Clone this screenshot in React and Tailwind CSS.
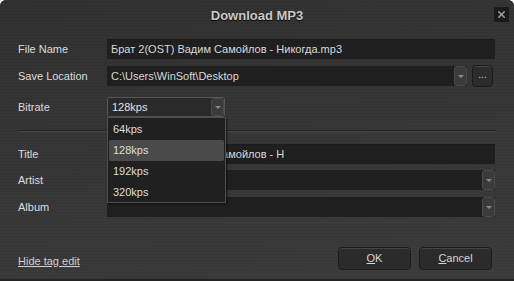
import { X } from 'lucide-react';

const BITRATES = ['64kps', '128kps', '192kps', '320kps'];

function Arrow() {
  return (
    <div className="w-[13px] self-stretch flex items-center justify-center bg-[#3b3b3b] border border-[#4a4a4a] rounded-[3px]">
      <div className="w-0 h-0 border-l-[3px] border-r-[3px] border-t-[3px] border-l-transparent border-r-transparent border-t-[#8a8a8a]" />
    </div>
  );
}

function Field({ label, children, className = '' }) {
  return (
    <div className={`flex items-center h-[20px] ${className}`}>
      <div className="w-[89px] text-[11px] text-[#dcdcdc]">{label}</div>
      {children}
    </div>
  );
}

function TextBox({ value }) {
  return (
    <div className="flex-1 h-full bg-[#1f1f1f] border-t border-[#1a1a1a] flex items-center pl-[4px] text-[11px] text-[#d8d8d8] whitespace-nowrap overflow-hidden">
      {value}
    </div>
  );
}

function Combo({ value = '' }) {
  return (
    <div className="flex-1 h-full bg-[#1f1f1f] flex items-center text-[11px] text-[#d8d8d8] whitespace-nowrap overflow-hidden">
      <span className="flex-1 pl-[4px]">{value}</span>
      <Arrow />
    </div>
  );
}

function DialogButton({ first, rest }) {
  return (
    <button className="w-[73px] h-[23px] rounded-[4px] bg-[#2b2b2b] border border-[#1b1b1b] shadow-[inset_0_1px_0_#454545] text-[11px] text-[#d4d4d4]">
      <span className="underline">{first}</span>
      {rest}
    </button>
  );
}

export default function App() {
  return (
    <div className="w-[514px] h-[281px] relative overflow-hidden rounded-t-[6px] border-b-2 border-[#232323] font-['Liberation_Sans',Arial,sans-serif] bg-[#363636] bg-[repeating-linear-gradient(0deg,rgba(0,0,0,0.06)_0px,rgba(0,0,0,0.06)_1px,transparent_1px,transparent_3px),linear-gradient(170deg,#313131_0%,#373737_50%,#3c3c3c_100%)]">
      {/* Title bar */}
      <div className="h-[31px] flex items-center justify-center text-[13px] font-bold text-[#c9c9c9] [text-shadow:0_1px_1px_#000]">
        Download MP3
      </div>
      <button className="absolute right-[5px] top-[7px] w-[15px] h-[15px] bg-[#1a1a1a] flex items-center justify-center">
        <X size={11} strokeWidth={3.5} className="text-[#9a9a9a]" />
      </button>

      <div className="pl-[18px] pr-[19px] pt-[8px]">
        <Field label="File Name">
          <TextBox value="Брат 2(OST) Вадим Самойлов - Никогда.mp3" />
        </Field>

        <Field label="Save Location" className="mt-[7px]">
          <div className="flex-1 h-full flex items-center gap-[5px] pr-[2px]">
            <Combo value="C:\Users\WinSoft\Desktop" />
            <button className="w-[21px] h-[22px] rounded-[4px] bg-[#2c2c2c] border border-[#1b1b1b] shadow-[inset_0_1px_0_#454545] text-[10px] leading-none text-[#cfcfcf] pb-[2px]">
              ...
            </button>
          </div>
        </Field>

        <Field label="Bitrate" className="mt-[11px]">
          <div className="w-[118px] h-full flex bg-[#2a2a2a] border border-[#555] rounded-[2px] items-center text-[11px] text-[#e2e2e2]">
            <span className="flex-1 pl-[4px]">128kps</span>
            <Arrow />
          </div>
        </Field>

        <div className="mt-[13px] h-[2px] border-t border-[#202020] border-b border-b-[#474747]" />

        <Field label="Title" className="mt-[12px]">
          <TextBox value="Брат 2(OST) Вадим Самойлов - Н" />
        </Field>
        <Field label="Artist" className="mt-[6px]">
          <Combo />
        </Field>
        <Field label="Album" className="mt-[7px]">
          <Combo />
        </Field>

        <div className="mt-[30px] flex items-end">
          <span className="text-[11px] text-[#cfcfcf] underline mb-[1px]">Hide tag edit</span>
          <div className="ml-auto flex gap-[8px] mr-[3px]">
            <DialogButton first="O" rest="K" />
            <DialogButton first="C" rest="ancel" />
          </div>
        </div>
      </div>

      {/* Bitrate dropdown list */}
      <div className="absolute left-[107px] top-[117px] w-[119px] h-[86px] bg-[#202020] border border-[#4e4e4e] shadow-[1px_1px_2px_rgba(0,0,0,0.6)] px-[1px] pt-[1px]">
        {BITRATES.map((b) => (
          <div
            key={b}
            className={`h-[21px] flex items-center pl-[4px] text-[11px] text-[#dcdcdc] rounded-[2px] ${
              b === '128kps' ? 'bg-[#4a4a4a]' : ''
            }`}
          >
            {b}
          </div>
        ))}
      </div>
    </div>
  );
}
